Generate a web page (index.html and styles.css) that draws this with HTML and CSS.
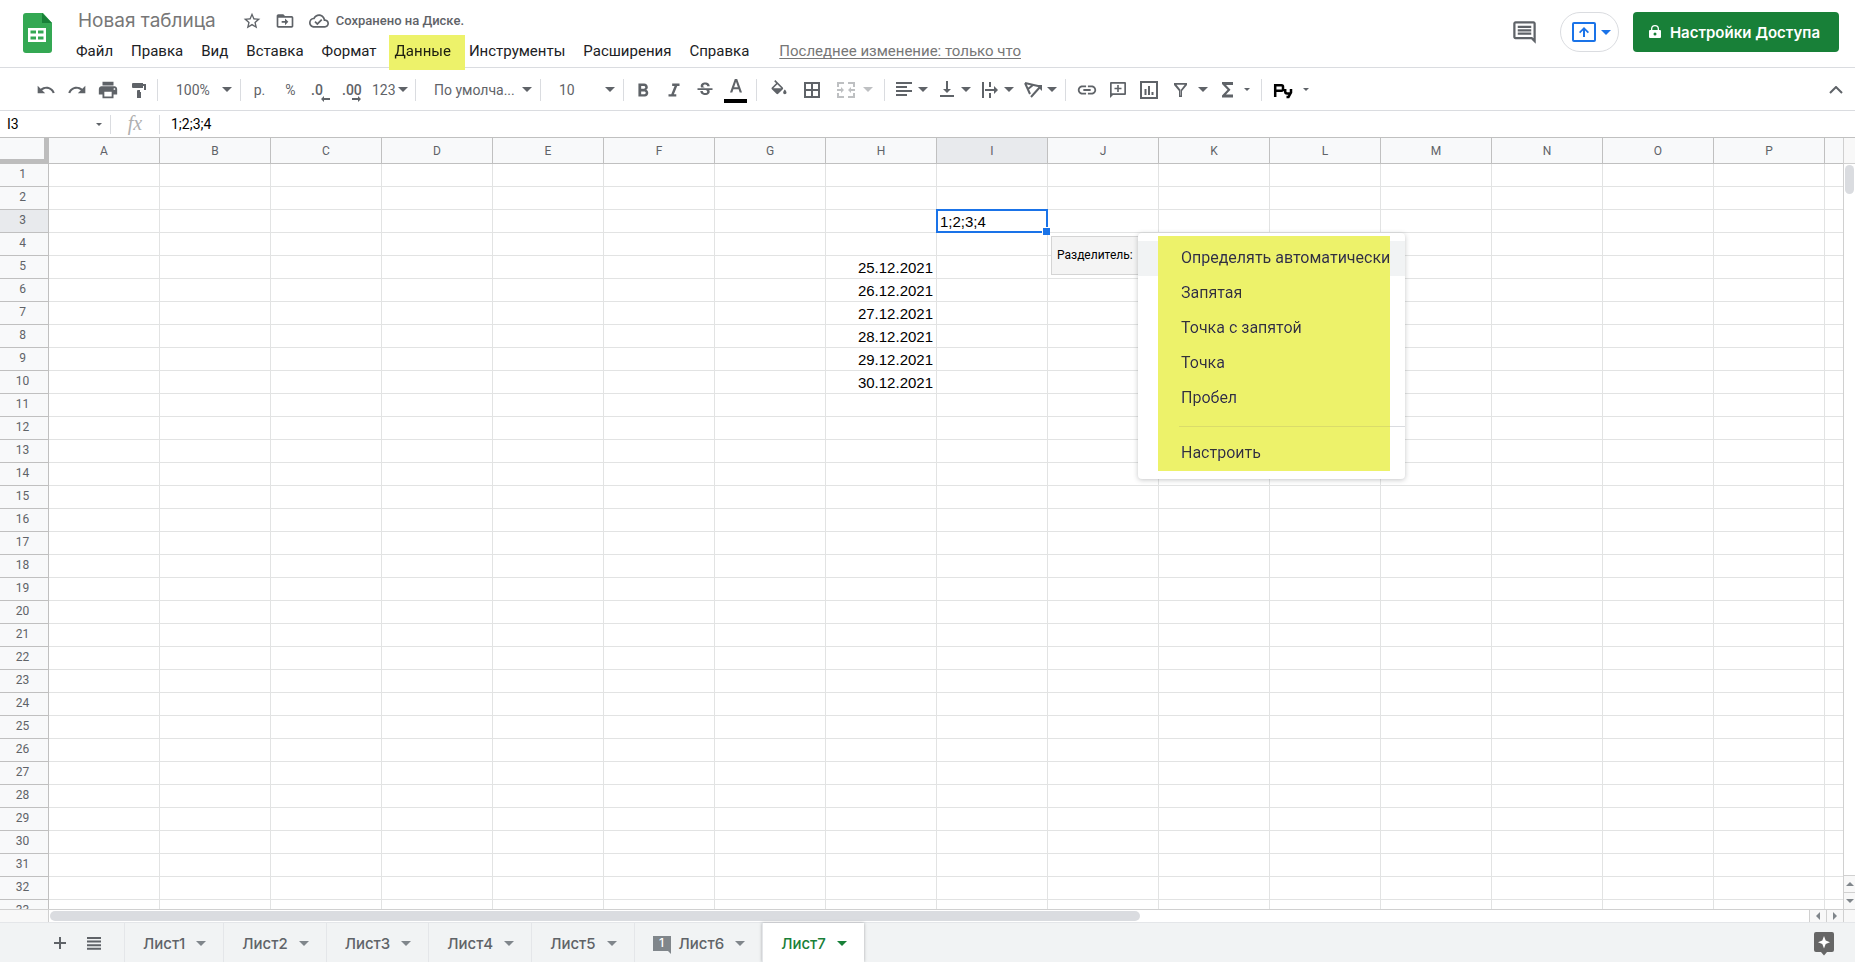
FILE: index.html
```html
<!DOCTYPE html>
<html lang="ru">
<head>
<meta charset="utf-8">
<title>Новая таблица</title>
<link rel="stylesheet" href="styles.css">
</head>
<body>
<header class="header">
  <a class="logo" href="#" aria-label="Таблицы">
    <svg width="30" height="40" viewBox="0 0 30 40">
      <path fill="#34a853" d="M3 0h17l9 10v27a3 3 0 0 1-3 3H3a3 3 0 0 1-3-3V3a3 3 0 0 1 3-3z"/>
      <path fill="#188038" d="M19 0l10 10H19z"/>
      <path fill="#fff" fill-rule="evenodd" d="M5 15h18v14H5zM7.500 17.500v3H13v-3zm7.500 0v3h5.500v-3zM7.500 23.500v3H13v-3zm7.500 0v3h5.500v-3z"/>
    </svg>
  </a>
  <div class="doc">
    <div class="title-row">
      <h1 class="title">Новая таблица</h1>
      <button class="mini" aria-label="Пометить"><svg width="20" height="20" viewBox="0 0 24 24"><path d="M22 9.240l-7.190-.620L12 2 9.190 8.630 2 9.240l5.460 4.730L5.820 21 12 17.270 18.180 21l-1.630-7.030L22 9.240zM12 15.400l-3.760 2.270 1-4.280-3.320-2.880 4.380-.380L12 6.100l1.710 4.040 4.380.380-3.320 2.880 1 4.280L12 15.400z"/></svg></button>
      <button class="mini" aria-label="Переместить"><svg width="20" height="20" viewBox="0 0 24 24"><path d="M20 6h-8l-2-2H4c-1.100 0-2 .900-2 2v12c0 1.100.900 2 2 2h16c1.100 0 2-.900 2-2V8c0-1.100-.900-2-2-2zm0 12H4V8h16v10zm-8-1l4-4-4-4v3H8v2h4z"/></svg></button>
      <span class="saved"><svg width="20" height="20" viewBox="0 0 24 24"><path d="M19.350 10.040C18.670 6.590 15.640 4 12 4 9.110 4 6.600 5.640 5.350 8.040 2.340 8.360 0 10.910 0 14c0 3.310 2.690 6 6 6h13c2.760 0 5-2.240 5-5 0-2.640-2.050-4.780-4.650-4.960zM19 18H6c-2.210 0-4-1.790-4-4 0-2.050 1.530-3.760 3.560-3.970l1.070-.110.500-.950C8.080 7.140 9.940 6 12 6c2.620 0 4.880 1.860 5.390 4.430l.300 1.500 1.530.110c1.560.100 2.780 1.410 2.780 2.960 0 1.650-1.350 3-3 3zm-9-3.820l-2.090-2.090L6.500 13.500 10 17l6.010-6.010-1.410-1.410z"/></svg>Сохранено на Диске.</span>
    </div>
    <nav class="menubar">
      <button>Файл</button><button>Правка</button><button>Вид</button><button>Вставка</button><button>Формат</button><button class="marked">Данные</button><button>Инструменты</button><button>Расширения</button><button>Справка</button>
      <a class="last-edit" href="#">Последнее изменение: только что</a>
    </nav>
  </div>
  <div class="actions">
    <button class="comments" aria-label="Комментарии"><svg width="27" height="27" viewBox="0 0 24 24"><path d="M21.990 4c0-1.100-.890-2-1.990-2H4c-1.100 0-2 .900-2 2v12c0 1.100.900 2 2 2h14l4 4-.010-18zM20 4v13.170L18.830 16H4V4h16zM6 12h12v2H6zm0-3h12v2H6zm0-3h12v2H6z"/></svg></button>
    <button class="present" aria-label="Презентация"><svg width="24" height="20" viewBox="0 0 24 20"><rect x="1" y="1" width="22" height="18" rx="1" fill="none" stroke="#1a73e8" stroke-width="2"/><path d="M12 5l5 5-1.200 1.200L13 8.500V15h-2V8.500l-2.800 2.700L7 10z"/></svg><i class="caret"></i></button>
    <button class="share"><svg width="14" height="14" viewBox="0 0 14 14"><path fill="#fff" fill-rule="evenodd" d="M3 5V4a4 4 0 0 1 8 0v1h1q1 0 1 1v6q0 1-1 1H2q-1 0-1-1V6q0-1 1-1zm1.300 0h5.400V4a2.700 2.700 0 0 0-5.400 0zM7 7.500a1.500 1.500 0 1 0 0 3 1.500 1.500 0 0 0 0-3z"/></svg>Настройки Доступа</button>
  </div>
</header>

<div class="toolbar">
  <button class="tool" aria-label="Отменить"><svg width="20" height="20" viewBox="0 0 24 24"><path d="M12.500 8c-2.650 0-5.050.990-6.900 2.600L2 7v9h9l-3.620-3.620c1.390-1.160 3.160-1.880 5.120-1.880 3.540 0 6.550 2.310 7.600 5.500l2.370-.780C21.080 11.030 17.150 8 12.500 8z"/></svg></button>
  <button class="tool" aria-label="Повторить"><svg width="20" height="20" viewBox="0 0 24 24"><path d="M18.400 10.600C16.550 8.990 14.150 8 11.500 8c-4.650 0-8.580 3.030-9.960 7.220L3.900 16c1.050-3.190 4.050-5.500 7.600-5.500 1.950 0 3.730.720 5.120 1.880L13 16h9V7l-3.600 3.600z"/></svg></button>
  <button class="tool" aria-label="Печать"><svg width="22" height="22" viewBox="0 0 24 24"><path d="M19 8H5c-1.660 0-3 1.340-3 3v6h4v4h12v-4h4v-6c0-1.660-1.340-3-3-3zm-3 11H8v-5h8v5zm3-7c-.550 0-1-.450-1-1s.450-1 1-1 1 .450 1 1-.450 1-1 1zm-1-9H6v4h12V3z"/></svg></button>
  <button class="tool" aria-label="Копировать форматирование"><svg width="18" height="18" viewBox="0 0 18 18"><path d="M3 2h10v5H3q-1 0-1-1V3q0-1 1-1zm10 1h3v6h-6v2h1v6H7v-7q0-1 1-1h6V5h-1z"/></svg></button>
  <i class="sep"></i>
  <label class="pick pick-small"><select aria-label="Масштаб"><option>100%</option></select><i class="caret"></i></label>
  <i class="sep"></i>
  <button class="tool">р.</button>
  <button class="tool">%</button>
  <button class="tool dec">.0<svg width="9" height="6" viewBox="0 0 9 6"><path d="M0 3l3-3v2h6v2H3v2z"/></svg></button>
  <button class="tool dec">.00<svg width="9" height="6" viewBox="0 0 9 6"><path d="M9 3L6 0v2H0v2h6v2z"/></svg></button>
  <button class="formats">123<i class="caret"></i></button>
  <i class="sep"></i>
  <label class="pick pick-font"><select aria-label="Шрифт"><option>По умолча...</option></select><i class="caret"></i></label>
  <i class="sep"></i>
  <label class="pick pick-small"><select aria-label="Размер шрифта"><option>10</option></select><i class="caret"></i></label>
  <i class="sep"></i>
  <button class="tool" aria-label="Полужирный"><svg width="22" height="22" viewBox="0 0 24 24"><path d="M15.600 11.790c.970-.670 1.650-1.770 1.650-2.790 0-2.260-1.750-4-4-4H7v14h7.040c2.090 0 3.710-1.700 3.710-3.790 0-1.520-.860-2.820-2.150-3.420zM10 7.500h3c.830 0 1.500.670 1.500 1.500s-.670 1.500-1.500 1.500h-3v-3zm3.500 9H10v-3h3.500c.830 0 1.500.670 1.500 1.500s-.670 1.500-1.500 1.500z"/></svg></button>
  <button class="tool" aria-label="Курсив"><svg width="22" height="22" viewBox="0 0 24 24"><path d="M10 5v2.500h2.600l-3.600 9H6V19h8.500v-2.500h-2.600l3.600-9H18V5z"/></svg></button>
  <button class="tool" aria-label="Зачеркнутый"><svg width="20" height="20" viewBox="0 0 24 24"><path d="M7.240 8.750c-.260-.480-.390-1.030-.390-1.670 0-.610.130-1.160.400-1.670.260-.500.630-.930 1.110-1.290.480-.350 1.050-.630 1.700-.830.660-.190 1.390-.290 2.180-.290.810 0 1.540.110 2.210.340.660.220 1.230.540 1.690.940.470.400.830.880 1.080 1.430s.380 1.150.380 1.810h-3.010c0-.310-.050-.590-.150-.850-.090-.270-.240-.490-.440-.680-.200-.190-.450-.330-.750-.440-.300-.100-.660-.160-1.060-.160-.390 0-.740.040-1.030.130s-.530.210-.720.360c-.190.160-.340.340-.440.550-.100.210-.150.430-.150.660 0 .480.250.880.740 1.210.380.250.770.480 1.410.700H7.390c-.050-.080-.110-.170-.150-.250zM21 12v-2H3v2h9.620c.180.070.400.140.550.200.370.170.660.340.870.510s.350.360.430.570c.070.200.110.430.110.690 0 .230-.050.450-.140.660-.090.200-.230.380-.420.530-.190.150-.420.260-.710.350-.290.080-.630.130-1.010.130-.430 0-.830-.040-1.180-.130s-.660-.230-.910-.420c-.250-.190-.450-.440-.590-.750s-.250-.760-.250-1.210H6.400c0 .550.080 1.130.240 1.580s.370.850.650 1.210c.280.350.600.660.980.920.370.260.780.480 1.220.650.440.170.900.300 1.380.390.480.080.960.130 1.440.130.800 0 1.530-.090 2.180-.280s1.210-.450 1.670-.790c.460-.340.820-.770 1.070-1.270s.380-1.070.380-1.710c0-.600-.100-1.140-.310-1.610-.050-.110-.110-.230-.170-.330H21V12z"/></svg></button>
  <button class="tool" aria-label="Цвет текста"><svg width="24" height="26" viewBox="0 0 24 26"><path d="M10.800 2h2.400L18 15.500h-2.300l-1.100-3.200H9.400l-1.100 3.200H6zm-.700 8.300h3.800L12 4.800z"/><path fill="#000" d="M0 22h23v4H0z"/></svg></button>
  <i class="sep sep-wide"></i>
  <button class="tool tool-wide" aria-label="Цвет заливки"><svg width="20" height="20" viewBox="0 0 24 24"><path d="M16.560 8.940L7.620 0 6.210 1.410l2.380 2.380-5.150 5.150c-.590.590-.590 1.540 0 2.120l5.500 5.500c.290.290.680.440 1.060.440s.770-.150 1.060-.440l5.500-5.500c.590-.580.590-1.530 0-2.120zM5.210 10L10 5.210 14.790 10H5.210zM19 11.500s-2 2.170-2 3.500c0 1.100.900 2 2 2s2-.900 2-2c0-1.330-2-3.500-2-3.500z"/></svg></button>
  <button class="tool tool-wide" aria-label="Границы"><svg width="16" height="16" viewBox="0 0 16 16"><path fill-rule="evenodd" d="M0 0h16v16H0zM2 2v5h5V2zm7 0v5h5V2zM2 9v5h5V9zm7 0v5h5V9z"/></svg></button>
  <button class="split split-off" aria-label="Объединить ячейки" disabled><svg width="18" height="18" viewBox="0 0 18 18"><path d="M0 1h7v2H2v3H0zM11 1h7v5h-2V3h-5zM0 12h2v3h5v2H0zM16 12h2v5h-7v-2h5zM0 8h4V6l3 3-3 3v-2H0zM18 8h-4V6l-3 3 3 3v-2h4z"/></svg><i class="caret"></i></button>
  <i class="sep"></i>
  <button class="split" aria-label="Выравнивание по горизонтали"><svg width="20" height="20" viewBox="0 0 20 20"><path d="M2 2h16v2H2zM2 6h11v2H2zM2 10h16v2H2zM2 14h11v2H2z"/></svg><i class="caret"></i></button>
  <button class="split" aria-label="Выравнивание по вертикали"><svg width="20" height="20" viewBox="0 0 20 20"><path d="M9 1h2v8h3l-4 4-4-4h3zM3 15h14v2H3z"/></svg><i class="caret"></i></button>
  <button class="split" aria-label="Перенос текста"><svg width="20" height="20" viewBox="0 0 20 20"><path d="M2 2h2v16H2zM9 2h2v5H9zM9 13h2v5H9zM5 9h9V6l4 4-4 4v-3H5z"/></svg><i class="caret"></i></button>
  <button class="split" aria-label="Поворот текста"><svg width="20" height="20" viewBox="0 0 20 20"><path fill="none" stroke="#5f6368" stroke-width="2" d="M8 17L17 7M2 3l13 3M2 3l5 11M10 5L5 9"/><path d="M13 5h6v6z"/></svg><i class="caret"></i></button>
  <i class="sep sep-wide"></i>
  <button class="tool" aria-label="Вставить ссылку"><svg width="22" height="22" viewBox="0 0 24 24"><path d="M3.900 12c0-1.710 1.390-3.100 3.100-3.100h4V7H7c-2.760 0-5 2.240-5 5s2.240 5 5 5h4v-1.900H7c-1.710 0-3.100-1.390-3.100-3.100zM8 13h8v-2H8v2zm9-6h-4v1.900h4c1.710 0 3.100 1.390 3.100 3.100s-1.390 3.100-3.100 3.100h-4V17h4c2.760 0 5-2.240 5-5s-2.240-5-5-5z"/></svg></button>
  <button class="tool" aria-label="Вставить комментарий"><svg width="16" height="16" viewBox="0 0 16 16"><path fill-rule="evenodd" d="M1 0h14q1 0 1 1v11q0 1-1 1H3l-3 3V1q0-1 1-1zm.700 1.700v9.600h12.600V1.700zM7.200 3h1.600v2.700h2.700v1.600H8.800V10H7.200V7.300H4.500V5.700h2.700z"/></svg></button>
  <button class="tool" aria-label="Вставить диаграмму"><svg width="18" height="18" viewBox="0 0 18 18"><path fill-rule="evenodd" d="M0 0h18v18H0zM2 2v14h14V2zM4.500 8h2v6h-2zM8 5h2v9H8zM11.500 11h2v3h-2z"/></svg></button>
  <button class="split split-wide" aria-label="Фильтр"><svg width="20" height="20" viewBox="0 0 20 20"><path fill-rule="evenodd" d="M4 3h13v2l-5 6v6H9v-6L4 5zm2.500 1.800l4.200 5.200v5.500h-.400V10h.400l4-5.200z"/></svg><i class="caret"></i></button>
  <button class="split split-sum" aria-label="Функции"><svg width="20" height="20" viewBox="0 0 20 20"><path d="M4 2h11v3H8l4.500 4.700L8 14.500h7v3H4v-2l5.500-5.800L4 4z"/></svg><i class="caret caret-small"></i></button>
  <i class="sep"></i>
  <button class="split split-input" aria-label="Инструменты ввода"><svg width="20" height="20" viewBox="0 0 20 20"><path fill="none" stroke="#000" stroke-width="2.500" d="M2.200 17V5.200h6.300q1.500 0 1.500 1.500v2.600q0 1.500-1.500 1.500H2.200M12.200 9v2.500q0 2 2 2h2.600M18 9v3.500l-2.500 4.500h-2"/></svg><i class="caret caret-small"></i></button>
  <button class="tool collapse" aria-label="Скрыть меню"><svg width="14" height="8" viewBox="0 0 14 8"><path fill="none" stroke="#5f6368" stroke-width="2" d="M1 7l6-6 6 6"/></svg></button>
</div>

<div class="formula-bar">
  <input class="name-box" aria-label="Диапазон" value="I3"><i class="caret caret-small"></i>
  <label class="fx" for="formula">fx</label>
  <input class="formula" id="formula" value="1;2;3;4">
</div>

<main class="workspace">
  <div class="viewport"><table class="grid" id="grid"></table></div>
  <div class="vbar"><div class="vbar-top"></div><div class="vtrack"><div class="vthumb"></div></div><button class="vstep" aria-label="Вверх"><i class="caret up"></i></button><button class="vstep" aria-label="Вниз"><i class="caret down"></i></button></div>
  <div class="hbar"><div class="hbar-corner"></div><div class="htrack"><div class="hthumb"></div></div><button class="hstep" aria-label="Влево"><i class="caret left"></i></button><button class="hstep" aria-label="Вправо"><i class="caret right"></i></button></div>
  <div class="bar-corner"></div>
</main>

<footer class="sheets">
  <button class="sheet-tool" aria-label="Добавить лист"><svg width="12" height="12" viewBox="0 0 12 12"><path d="M5 0h2v5h5v2H7v5H5V7H0V5h5z"/></svg></button>
  <button class="sheet-tool" aria-label="Все листы"><svg width="14" height="13" viewBox="0 0 14 13"><path d="M0 0h14v2H0zM0 3.600h14v2H0zM0 7.200h14v2H0zM0 10.800h14v2H0z"/></svg></button>
  <div class="tabs">
    <button class="tab">Лист1<i class="caret"></i></button>
    <button class="tab">Лист2<i class="caret"></i></button>
    <button class="tab">Лист3<i class="caret"></i></button>
    <button class="tab">Лист4<i class="caret"></i></button>
    <button class="tab">Лист5<i class="caret"></i></button>
    <button class="tab"><span class="note">1</span>Лист6<i class="caret"></i></button>
    <button class="tab tab-active">Лист7<i class="caret"></i></button>
  </div>
  <button class="explore" aria-label="Анализ данных"><svg width="22" height="24" viewBox="0 0 22 24"><path fill="#666" d="M3 0h16q2 0 2 2v16q0 2-2 2h-5l-3 3.500L8 20H3q-2 0-2-2V2q0-2 2-2z"/><path fill="#fff" d="M11 4l1.700 4.500L17 10.200l-4.300 1.700L11 16.400l-1.700-4.500L5 10.200l4.300-1.700z"/></svg></button>
</footer>
<template id="paste-options">
  <div class="selection"><i class="handle"></i></div>
  <div class="paste">
    <span class="paste-label" id="paste-label">Разделитель:</span>
    <div class="options" role="menu" aria-labelledby="paste-label">
      <button class="option current">Определять автоматически</button>
      <button class="option">Запятая</button>
      <button class="option">Точка с запятой</button>
      <button class="option">Точка</button>
      <button class="option">Пробел</button>
      <hr>
      <button class="option">Настроить</button>
    </div>
  </div>
</template>
<script src="grid.js"></script>
</body>
</html>
```
FILE: grid.js
```js
const letters = 'ABCDEFGHIJKLMNOPQ'.split('');
const values = {
  I3: '1;2;3;4',
  H5: '25.12.2021', H6: '26.12.2021', H7: '27.12.2021',
  H8: '28.12.2021', H9: '29.12.2021', H10: '30.12.2021'
};
const table = document.getElementById('grid');

const head = table.createTHead().insertRow();
head.innerHTML = '<td class="corner"></td>' + letters.map(l =>
  `<th scope="col"${l === 'I' ? ' class="active"' : ''}>${l === 'Q' ? '' : l}</th>`).join('');

const body = table.createTBody();
for (let r = 1; r <= 33; r++) {
  const row = body.insertRow();
  row.innerHTML = `<th scope="row"${r === 3 ? ' class="active"' : ''}>${r}</th>` +
    letters.map(l => `<td class="${l === 'H' ? 'date' : ''}">${values[l + r] || ''}</td>`).join('');
}

const cell = body.rows[2].cells[9];
cell.classList.add('selected');
cell.append(document.getElementById('paste-options').content.cloneNode(true));
```
FILE: styles.css
```css
* { box-sizing: border-box; }
body {
  margin: 0;
  height: 100vh;
  display: flex;
  flex-direction: column;
  overflow: hidden;
  background: #fff;
  color: #202124;
  font-family: Roboto, "Liberation Sans", sans-serif;
  font-size: 14px;
}
button, input, select { font: inherit; color: inherit; border: 0; padding: 0; margin: 0; background: none; }
svg { display: block; flex: none; fill: #5f6368; }

.caret {
  flex: none;
  width: 0;
  height: 0;
  border: solid transparent;
  border-width: 5px 5px 0;
  border-top-color: #5f6368;
}
.caret-small { border-width: 3px 3px 0; }
.down { border-width: 4px 4px 0; border-color: #80868b transparent transparent; }
.up { border-width: 0 4px 4px; border-color: transparent transparent #80868b; }
.left { border-width: 4px 4px 4px 0; border-color: transparent #80868b transparent transparent; }
.right { border-width: 4px 0 4px 4px; border-color: transparent transparent transparent #80868b; }

/* Header */
.header { display: flex; height: 68px; flex: none; border-bottom: 1px solid #dadce0; }
.logo { padding: 13px 0 0 23px; width: 76px; }
.doc { display: flex; flex-direction: column; }
.title-row { display: flex; align-items: center; height: 35px; flex: none; padding: 6px 0 0 2px; }
.title { margin: 0 26px 0 0; font: 400 19px/26px Inter, sans-serif; color: #777; }
.mini { width: 20px; margin-right: 13px; }
.saved { display: flex; align-items: center; gap: 7px; margin-left: 1px; font-size: 13px; font-weight: 500; color: #5f6368; }
.menubar { display: flex; font-size: 15px; }
.menubar button { height: 32px; padding-right: 18px; }
.menubar .marked { position: relative; height: 35px; padding: 0 14px 3px 6px; margin: 0 4px 0 -6px; z-index: 1; }
.marked::after { content: ""; position: absolute; inset: 0; background: #edf26a; mix-blend-mode: multiply; }
.last-edit { line-height: 32px; margin-left: 12px; color: #777; text-underline-offset: 2px; }
.actions { display: flex; align-items: center; height: 40px; margin: 12px 16px 0 auto; }
.comments { margin-right: 22px; }
.present { display: flex; align-items: center; justify-content: center; gap: 5px; width: 59px; height: 40px; margin-right: 14px; padding-left: 5px; border: 1px solid #dadce0; border-radius: 20px; }
.present svg { fill: #1a73e8; }
.present .caret { border-top-color: #1a73e8; }
.share { display: flex; align-items: center; gap: 8px; height: 40px; padding: 0 19px 0 15px; border-radius: 4px; background: #188038; color: #fff; font: 600 15px Inter, sans-serif; }

/* Toolbar */
.toolbar { display: flex; align-items: center; height: 43px; flex: none; padding: 1px 0 0 30px; border-bottom: 1px solid #dadce0; color: #5f6368; }
.tool { display: flex; align-items: center; justify-content: center; width: 31px; height: 30px; flex: none; }
.tool-wide { width: 33px; }
.sep { width: 1px; height: 22px; margin: 0 3px; flex: none; background: #dadce0; }
.sep-wide { margin: 0 5px; }
.pick { display: flex; align-items: center; justify-content: space-between; padding: 0 5px 0 15px; }
.pick select { appearance: none; outline: 0; }
.pick-small { width: 76px; }
.pick-font { width: 118px; }
.dec { position: relative; justify-content: flex-start; padding-left: 5px; font-weight: 500; }
.dec svg { position: absolute; right: 7px; bottom: 3px; }
.formats { display: flex; align-items: center; gap: 2px; width: 44px; padding-left: 4px; }
.split { display: flex; align-items: center; gap: 4px; padding: 0 3px 0 6px; height: 30px; }
.split-wide { gap: 8px; padding-right: 6px; }
.split-off { gap: 8px; padding: 0 8px 0 9px; opacity: .4; }
.split-sum { gap: 6px; padding: 0 8px 0 4px; }
.split-input { gap: 10px; padding-left: 8px; }
.collapse { margin: 0 4px 0 auto; }

/* Formula bar */
.formula-bar { display: flex; align-items: center; height: 27px; flex: none; border-bottom: 1px solid #c0c0c0; color: #000; }
.name-box { width: 96px; padding-left: 7px; }
.fx { width: 50px; height: 19px; margin-left: 8px; border: solid #dadce0; border-width: 0 1px; text-align: center; color: #b0b0b0; font: italic 20px/17px "Liberation Serif", serif; }
.formula { flex: 1; padding-left: 11px; }

/* Grid */
.workspace { flex: 1; min-height: 0; display: grid; grid-template-columns: 1fr 12px; grid-template-rows: 1fr 13px; }
.viewport { overflow: hidden; min-width: 0; min-height: 0; }
.grid { width: 1936px; table-layout: fixed; border-spacing: 0; }
.grid th, .grid td { width: 111px; height: 23px; padding: 0; border: solid #e2e3e3; border-width: 0 1px 1px 0; line-height: 20px; }
.grid td { padding: 1px 3px 0; color: #000; font-family: "Liberation Sans", sans-serif; font-size: 15px; white-space: nowrap; }
.grid th { background: #f8f9fa; border-color: #c0c0c0; color: #5f6368; font-size: 12px; font-weight: 400; }
.grid thead th { height: 26px; }
.grid tbody th { padding: 0 3px 2px 0; }
.grid .corner, .grid tbody th { width: 49px; }
.grid .corner { background: #f8f9fa; border: solid #bdbdbd; border-width: 0 5px 5px 0; }
.grid .active { background: #e8eaed; }
.grid .date { text-align: right; }
.selected { position: relative; }
.selection { position: absolute; inset: -1px; border: 2px solid #1a73e8; }
.handle { position: absolute; right: -4px; bottom: -4px; width: 8px; height: 8px; border: solid #fff; border-width: 1px 0 0 1px; background: #1a73e8; }

.paste { position: absolute; left: 114px; top: 23px; z-index: 2; display: flex; align-items: flex-start; font-family: Roboto, sans-serif; }
.paste-label { width: 87px; height: 39px; margin-top: 3px; padding-left: 5px; border: 1px solid #d4d4d4; border-right: 0; background: #f4f4f4; font-size: 12px; line-height: 36px; }
.options { position: relative; width: 267px; padding: 8px 0; border-radius: 4px; background: #fff; box-shadow: 0 1px 5px rgba(60, 64, 67, .3); }
.options::after { content: ""; position: absolute; inset: 3px 15px 8px 20px; background: #edf26a; mix-blend-mode: darken; pointer-events: none; }
.option { display: block; width: 100%; height: 35px; padding: 0 0 1px 43px; text-align: left; font-size: 16px; color: #333; }
.current { background: #f1f3f4; }
.options hr { height: 1px; margin: 10px 0 9px 41px; border: 0; background: #dadce0; }

/* Scrollbars */
.vbar { display: flex; flex-direction: column; border-left: 1px solid #d0d0d0; }
.vbar-top { height: 26px; border-bottom: 1px solid #d0d0d0; background: #f8f8f8; }
.vtrack { flex: 1; padding: 1px; }
.vthumb { height: 29px; border-radius: 5px; background: #dadce0; }
.vstep { display: flex; align-items: center; justify-content: center; height: 17px; border-top: 1px solid #d0d0d0; background: #f8f8f8; }
.hbar { display: flex; border-top: 1px solid #d0d0d0; }
.hbar-corner { width: 49px; border-right: 1px solid #d0d0d0; background: #f8f8f8; }
.htrack { flex: 1; padding: 1px; }
.hthumb { width: 62%; height: 10px; border-radius: 5px; background: #dadce0; }
.hstep { display: flex; align-items: center; justify-content: center; width: 17px; border-left: 1px solid #d0d0d0; background: #f8f8f8; }
.bar-corner { border: solid #d0d0d0; border-width: 1px 0 0 1px; background: #f8f8f8; }

/* Sheet tabs */
.sheets { display: flex; align-items: stretch; height: 40px; flex: none; padding-left: 43px; border-top: 1px solid #e4e6e9; background: #f1f3f4; }
.sheet-tool { display: flex; align-items: center; justify-content: center; width: 34px; padding-top: 1px; }
.tabs { display: flex; margin-left: 13px; }
.tab { display: flex; align-items: center; gap: 11px; padding: 2px 17px 0 18px; border-left: 1px solid #e4e6e9; color: #5f6368; font: 500 15px Inter, sans-serif; }
.tab .caret { border-top-color: #80868b; }
.note { position: relative; width: 18px; height: 15px; margin-right: -3px; background: #80868b; color: #fff; font-size: 12px; line-height: 14px; }
.note::after { content: ""; position: absolute; right: 0; top: 15px; border: solid transparent; border-width: 3px 0 0 3px; border-top-color: #80868b; }
.tab-active { background: #fff; color: #188038; box-shadow: 0 0 3px rgba(60, 64, 67, .4); }
.tab-active .caret { border-top-color: #188038; }
.explore { margin: 2px 20px 0 auto; }
```
